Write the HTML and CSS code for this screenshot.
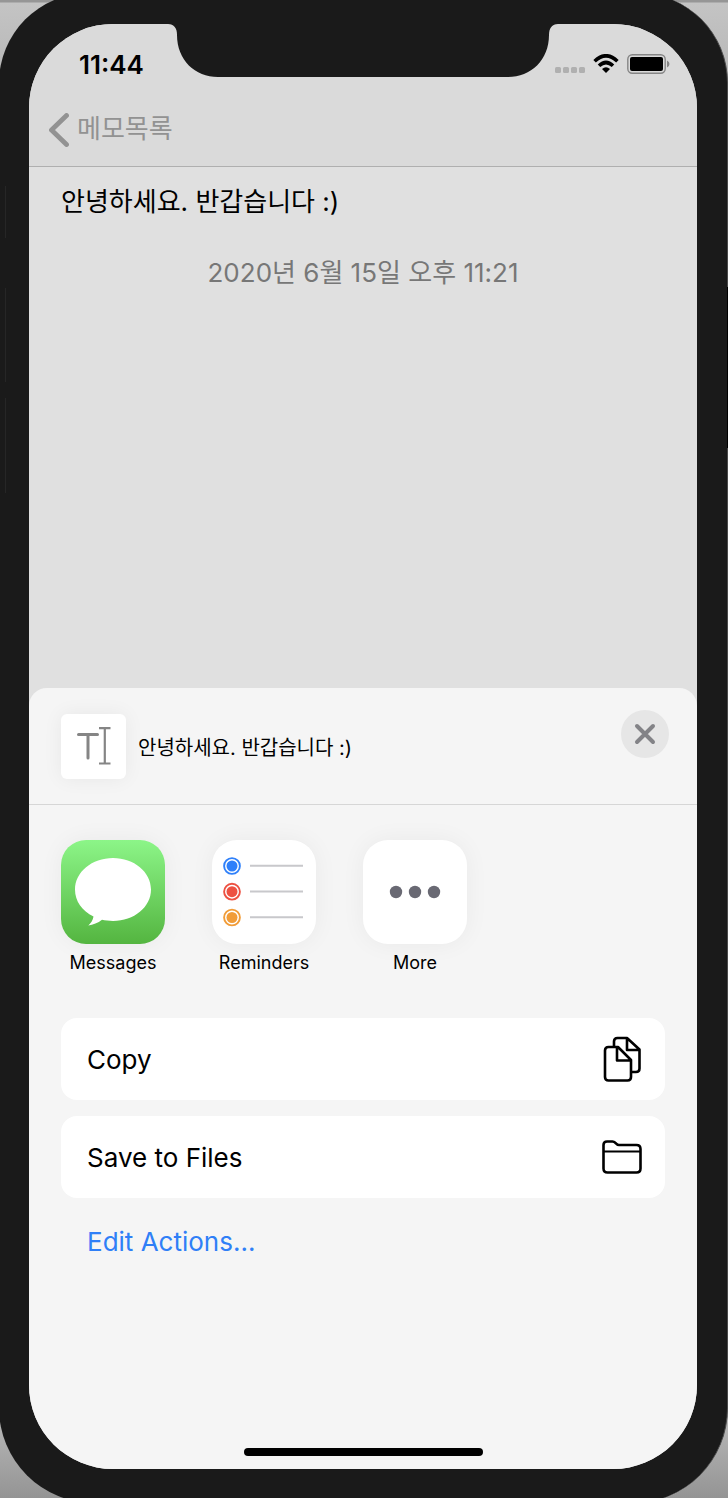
FILE: index.html
```html
<!DOCTYPE html>
<html lang="ko">
<head>
<meta charset="utf-8">
<meta name="viewport" content="width=device-width, initial-scale=1">
<title>메모목록</title>
<link rel="stylesheet" href="styles.css">
</head>
<body>
<div class="device">
  <span class="side-key side-key-mute"></span>
  <span class="side-key side-key-up"></span>
  <span class="side-key side-key-down"></span>
  <span class="side-key side-key-power"></span>
  <div class="screen">
    <svg class="notch" viewBox="0 0 398 53" aria-hidden="true"><path d="M0 0H4C10 0 13 4 13 11C13 36 31 53 54 53H344C367 53 385 36 385 11C385 4 388 0 394 0H398Z" fill="#1a1a1a"/></svg>
    <header class="topbar">
      <div class="status">
        <time class="clock">11:44</time>
        <div class="indicators">
          <svg width="31" height="7" viewBox="0 0 31 7" fill="#b0b0b0" aria-hidden="true"><rect width="6" height="6" rx="1.5"/><rect x="8" width="6" height="6" rx="1.5"/><rect x="16" width="6" height="6" rx="1.5"/><rect x="24" width="6" height="6" rx="1.5"/></svg>
          <svg class="wifi" width="26" height="20" viewBox="0 0 26 20" aria-hidden="true"><path d="M1.600 7.200Q13-3.600 24.400 7.200M6 11.800Q13 5.200 20 11.800" fill="none" stroke="#000" stroke-width="3.600"/><path d="M9 15Q13 11.500 17 15L13 19Z"/></svg>
          <svg width="43" height="20" viewBox="0 0 43 20" aria-hidden="true"><rect x=".8" y=".8" width="37.400" height="18.400" rx="4.500" fill="none" stroke="#858585" stroke-width="1.400"/><rect x="3" y="3" width="33" height="14" rx="2"/><path d="M40 6.500Q42.500 7.500 42.500 10T40 13.500Z" fill="#858585"/></svg>
        </div>
      </div>
      <nav class="nav">
        <button class="back" type="button">
          <svg width="20" height="34" viewBox="0 0 20 34" aria-hidden="true"><path d="M17.500 2.500L2.500 17L17.500 31.500" fill="none" stroke="#929292" stroke-width="4.800" stroke-linecap="round" stroke-linejoin="round"/></svg>
          <span>메모목록</span>
        </button>
      </nav>
    </header>
    <main class="memo">
      <p class="memo-text">안녕하세요. 반갑습니다 :)</p>
      <p class="memo-date">2020년 6월 15일 오후 11:21</p>
    </main>
    <section class="sheet" aria-label="Share">
      <div class="sheet-head">
        <div class="thumb">
          <svg width="34" height="38" viewBox="0 0 34 38" fill="none" stroke="#858585" aria-hidden="true"><path d="M1.500 7.500H20.500M11 7.500V31" stroke-width="3" stroke-linecap="round"/><path d="M22 1.200H33.500M22 36.500H33.500M27.800 1.200V36.500" stroke-width="2.200"/></svg>
        </div>
        <p class="sheet-title">안녕하세요. 반갑습니다 :)</p>
        <button class="close" type="button" aria-label="Close">
          <svg width="22" height="22" viewBox="0 0 22 22" aria-hidden="true"><path d="M3 3L19 19M19 3L3 19" stroke="#838387" stroke-width="4" stroke-linecap="round"/></svg>
        </button>
      </div>
      <div class="apps">
        <button class="app" type="button">
          <span class="app-icon app-messages">
            <svg width="104" height="104" viewBox="0 0 104 104" aria-hidden="true"><path d="M52 18C73 18 90 32 90 49.500S73 81 52 81C48 81 44 80.500 41 79.800C37 83 32 85 27.300 85.500C30 83 32 80 32.500 76.500C21 71 14 61 14 49.500C14 32 31 18 52 18Z" fill="#fff"/></svg>
          </span>
          <span>Messages</span>
        </button>
        <button class="app" type="button">
          <span class="app-icon">
            <svg width="104" height="104" viewBox="0 0 104 104" fill="none" aria-hidden="true"><path d="M38 25.700H91M38 51.500H91M38 77.300H91" stroke="#c8c8cb" stroke-width="2"/><circle cx="20" cy="26" r="7.900" stroke="#2f80fa" stroke-width="1.900"/><circle cx="20" cy="26" r="5.500" fill="#2f80fa"/><circle cx="20" cy="51.700" r="7.900" stroke="#ed5142" stroke-width="1.900"/><circle cx="20" cy="51.700" r="5.500" fill="#ed5142"/><circle cx="20" cy="77.500" r="7.900" stroke="#f19c38" stroke-width="1.900"/><circle cx="20" cy="77.500" r="5.500" fill="#f19c38"/></svg>
          </span>
          <span>Reminders</span>
        </button>
        <button class="app" type="button">
          <span class="app-icon">
            <svg width="104" height="104" viewBox="0 0 104 104" fill="#696973" aria-hidden="true"><circle cx="33" cy="52" r="6.200"/><circle cx="52" cy="52" r="6.200"/><circle cx="71" cy="52" r="6.200"/></svg>
          </span>
          <span>More</span>
        </button>
      </div>
      <div class="actions">
        <button class="action" type="button">
          <span>Copy</span>
          <svg width="40" height="46" viewBox="0 0 40 46" fill="none" stroke="#000" stroke-width="2.600" stroke-linejoin="round" aria-hidden="true"><path d="M12 10V5.500Q12 2 15.500 2H25L37.500 13.500V32.500Q37.500 36 34 36H29.500M25 2V14H37"/><path d="M6.500 11H16L29 24V41Q29 44.500 25.500 44.500H6.500Q3 44.500 3 41V14.500Q3 11 6.500 11ZM15 11V24.500H28.500"/></svg>
        </button>
        <button class="action" type="button">
          <span>Save to Files</span>
          <svg width="40" height="34" viewBox="0 0 40 34" fill="none" stroke="#000" stroke-width="2.600" stroke-linejoin="round" aria-hidden="true"><path d="M1.500 28.500V5Q1.500 1.500 5 1.500H10.500Q12 1.500 13.200 2.700L14.500 3.900Q15.500 5 17 5H34.500Q38.500 5 38.500 9V28.500Q38.500 32.500 34.500 32.500H5.500Q1.500 32.500 1.500 28.500Z"/><path d="M1.500 11.500H38.500" stroke-width="2"/></svg>
        </button>
        <button class="edit" type="button">Edit Actions...</button>
      </div>
      <div class="home"></div>
    </section>
  </div>
</div>
</body>
</html>
```
FILE: styles.css
```css
* {
  box-sizing: border-box;
}

body {
  margin: 0;
  overflow: hidden;
  background: linear-gradient(#969696 0, #969696 2px, #c4c4c4 3px, #b8b8b8 70px, #b8b8b8 calc(100% - 80px), #949494);
  font-family: Inter, "Noto Sans CJK KR", sans-serif;
  color: #000;
}

p {
  margin: 0;
}

button {
  padding: 0;
  border: 0;
  background: none;
  font: inherit;
  color: inherit;
  cursor: pointer;
}

svg {
  display: block;
  flex: none;
}

.device {
  position: relative;
  margin: -7px 0 -5px -1px;
  padding: 31px 30px 34px;
  border-right: 1px solid #4a4a4a;
  border-radius: 90px 90px 95px 95px;
  background: #1a1a1a;
}

.side-key {
  position: absolute;
  left: 6px;
  width: 1px;
  background: #262626;
}

.side-key-mute {
  top: 193px;
  height: 52px;
}

.side-key-up {
  top: 295px;
  height: 94px;
}

.side-key-down {
  top: 405px;
  height: 95px;
}

.side-key-power {
  top: 294px;
  left: auto;
  right: -1px;
  height: 161px;
  background: #000;
}

.screen {
  position: relative;
  display: flex;
  flex-direction: column;
  min-height: calc(100vh - 53px);
  overflow: hidden;
  border-radius: 84px;
  background: #e0e0e0;
}

.notch {
  position: absolute;
  top: 0;
  left: 50%;
  width: 398px;
  margin-left: -199px;
}

.topbar {
  border-bottom: 1px solid #afafaf;
  background: #dadada;
}

.status {
  display: flex;
  align-items: center;
  justify-content: space-between;
  height: 80px;
  padding: 0 27px 0 50px;
}

.clock {
  font-size: 26px;
  font-weight: 600;
}

.indicators {
  display: flex;
  align-items: flex-end;
  gap: 7px;
}

.indicators .wifi {
  margin-right: 1px;
}

.nav {
  display: flex;
  align-items: flex-start;
  height: 62px;
  padding: 0 20px;
}

.back {
  display: flex;
  align-items: center;
  gap: 8px;
  height: 52px;
  font-size: 26px;
  line-height: 36px;
  color: #929292;
}

.back span {
  padding-bottom: 2px;
}

.memo {
  flex: 1;
  padding: 16px 32px;
  font-size: 26px;
  line-height: 38px;
}

.memo-date {
  margin-top: 33px;
  text-align: center;
  color: #777;
}

.sheet {
  border-radius: 18px 18px 0 0;
  background: #f5f5f5;
}

.sheet-head {
  display: flex;
  align-items: center;
  gap: 12px;
  height: 117px;
  padding: 0 28px 0 32px;
  border-bottom: 1px solid #d6d6d6;
}

.thumb {
  display: grid;
  place-items: center;
  width: 65px;
  height: 65px;
  border-radius: 6px;
  background: #fff;
  box-shadow: 0 0 20px rgba(0, 0, 0, 0.06);
}

.sheet-title {
  flex: 1;
  font-size: 20px;
}

.close {
  display: grid;
  place-items: center;
  width: 48px;
  height: 48px;
  margin-bottom: 24px;
  border-radius: 50%;
  background: #e6e6e6;
}

.apps {
  display: flex;
  gap: 47px;
  padding: 35px 32px 42px;
}

.app {
  display: flex;
  flex-direction: column;
  align-items: center;
  gap: 6px;
  width: 104px;
  font-size: 18px;
  line-height: 26px;
}

.app-icon {
  border-radius: 25px;
  background: #fff;
  box-shadow: 0 0 24px rgba(0, 0, 0, 0.05);
}

.app-messages {
  background: linear-gradient(#8cf588, #54b540);
}

.actions {
  display: flex;
  flex-direction: column;
  gap: 16px;
  padding: 0 32px;
}

.action {
  display: flex;
  align-items: center;
  justify-content: space-between;
  height: 82px;
  padding: 0 23px 0 26px;
  border-radius: 16px;
  background: #fff;
  font-size: 26px;
}

.edit {
  align-self: flex-start;
  padding: 0 26px;
  font-size: 26px;
  line-height: 56px;
  color: #2f7ff7;
}

.home {
  width: 239px;
  height: 8px;
  margin: 178px auto 13px;
  border-radius: 4px;
  background: #000;
}
```
